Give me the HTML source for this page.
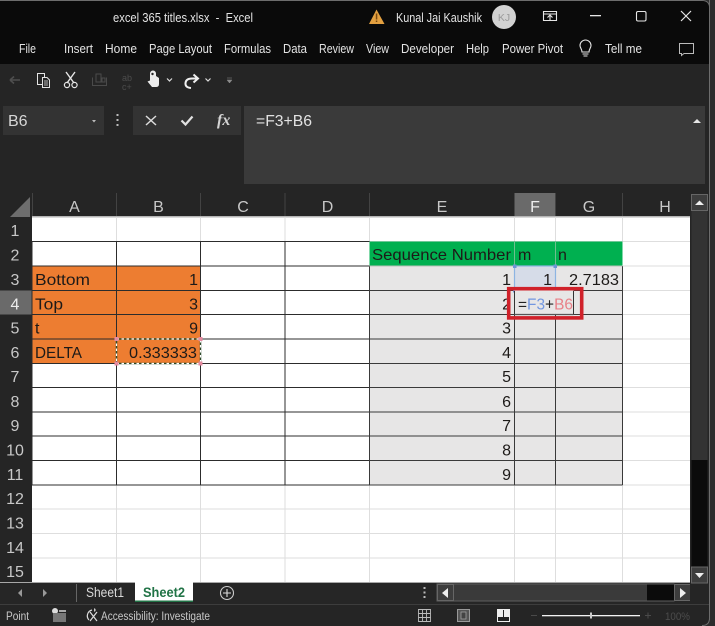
<!DOCTYPE html>
<html><head><meta charset="utf-8"><title>excel 365 titles.xlsx - Excel</title>
<style>
html,body{margin:0;padding:0;background:#2b2b2b;width:715px;height:626px;overflow:hidden}
svg{display:block;position:absolute;left:0;top:0}
text{font-family:"Liberation Sans",sans-serif}
.t{font-size:12.5px;fill:#e4e4e4}
.c{font-size:16px;fill:#1d1a18}
.e{font-size:16px;fill:#1d1a18;text-anchor:end}
.h{font-size:16px;fill:#c8c8c8;text-anchor:middle}
</style></head><body>
<svg width="715" height="626" viewBox="0 0 715 626" xmlns="http://www.w3.org/2000/svg">
<!-- window -->
<rect x="0" y="0" width="715" height="626" fill="#2d2d2d"/>
<path d="M0 0H702Q710 0 710 8V618Q710 626 702 626H0Z" fill="#252525"/>
<path d="M0 .5H702Q709.5 .5 709.5 8V618Q709.5 625.5 702 625.5" fill="none" stroke="#6d6d6d"/>
<path d="M0 1H702Q709 1 709 8V64H0Z" fill="#0a0a0a"/>
<!-- title bar -->
<text class="t" x="113" y="22" textLength="140" lengthAdjust="spacingAndGlyphs">excel 365 titles.xlsx&#160;&#160;-&#160;&#160;Excel</text>
<path d="M376.5 9.5L384.5 24H369Z" fill="#e3a040"/><rect x="375.8" y="13.5" width="1.5" height="6" fill="#7a4a10"/><rect x="375.8" y="20.5" width="1.5" height="1.5" fill="#7a4a10"/>
<text class="t" x="396" y="22" textLength="86" lengthAdjust="spacingAndGlyphs">Kunal Jai Kaushik</text>
<circle cx="504" cy="17" r="12" fill="#d2d2d2"/><text x="504" y="21" text-anchor="middle" font-size="10.5" fill="#9a9a9a">KJ</text>
<path d="M543.5 11.5H556.5V20.5H543.5ZM543.5 14H556.5M550 20V15.5M547.5 17.5L550 15L552.5 17.5" fill="none" stroke="#e6e6e6" stroke-width="1.1"/>
<rect x="590" y="15" width="11" height="1.3" fill="#e6e6e6"/>
<rect x="636.5" y="11.5" width="9.5" height="9.5" rx="1.5" fill="none" stroke="#e6e6e6" stroke-width="1.1"/>
<path d="M681 11L691 21M691 11L681 21" stroke="#e6e6e6" stroke-width="1.2" fill="none"/>
<!-- tabs -->
<text class="t" x="19" y="53" textLength="17" lengthAdjust="spacingAndGlyphs">File</text>
<text class="t" x="64" y="53" textLength="29" lengthAdjust="spacingAndGlyphs">Insert</text>
<text class="t" x="105" y="53" textLength="32" lengthAdjust="spacingAndGlyphs">Home</text>
<text class="t" x="149" y="53" textLength="63" lengthAdjust="spacingAndGlyphs">Page Layout</text>
<text class="t" x="224" y="53" textLength="47" lengthAdjust="spacingAndGlyphs">Formulas</text>
<text class="t" x="283" y="53" textLength="24" lengthAdjust="spacingAndGlyphs">Data</text>
<text class="t" x="319" y="53" textLength="35" lengthAdjust="spacingAndGlyphs">Review</text>
<text class="t" x="366" y="53" textLength="23" lengthAdjust="spacingAndGlyphs">View</text>
<text class="t" x="401" y="53" textLength="53" lengthAdjust="spacingAndGlyphs">Developer</text>
<text class="t" x="466" y="53" textLength="23" lengthAdjust="spacingAndGlyphs">Help</text>
<text class="t" x="502" y="53" textLength="61" lengthAdjust="spacingAndGlyphs">Power Pivot</text>
<path d="M582 52C582 49 580 48 580 45.5A5.5 5.5 0 0 1 591 45.5C591 48 589 49 589 52ZM582.5 54H588.5M583.5 56H587.5" fill="none" stroke="#e4e4e4" stroke-width="1.1"/>
<text class="t" x="605" y="53" textLength="37" lengthAdjust="spacingAndGlyphs">Tell me</text>
<path d="M679.5 43.5H693.500V53.5H684L681.5 55.5V53.5H679.5Z" fill="none" stroke="#bbb" stroke-width="1"/>
<!-- quick access -->
<path d="M10 80H20M10 80L14 76.5M10 80L14 83.5" stroke="#4e4e4e" stroke-width="1.6" fill="none"/>
<path d="M37.5 73.5H44.5V84.5H37.5Z" fill="#252525" stroke="#e4e4e4"/><path d="M42.5 77.5H47L49.5 80V87.5H42.5Z" fill="#252525" stroke="#e4e4e4"/><path d="M44 81H48M44 83H48M44 85H48" stroke="#e4e4e4" stroke-width=".8"/>
<path d="M66 72L74 83M75 72L67 83" stroke="#e6e6e6" stroke-width="1.4" fill="none"/><circle cx="67" cy="85" r="2.6" fill="none" stroke="#e6e6e6" stroke-width="1.2"/><circle cx="74.5" cy="85" r="2.6" fill="none" stroke="#e6e6e6" stroke-width="1.2"/>
<path d="M92.5 77.5V85.5H106.5V77.5M96 74H101V82H96ZM102 78H105V82H102Z" fill="none" stroke="#4a4a4a"/>
<text x="122" y="81" font-size="9" fill="#4c4c4c">ab</text><text x="122" y="90" font-size="9" fill="#4c4c4c">c+</text>
<path d="M150 73.5A3 3 0 0 1 156 73.5V76L159 78V84Q159 87 156 87H152L147.5 81.5L150 80.5Z" fill="#ececec"/><circle cx="152.5" cy="74" r="1.2" fill="#252525"/>
<path d="M167 78.5L169.5 81L172 78.5" stroke="#ddd" stroke-width="1.2" fill="none"/>
<path d="M191 88Q185 87.5 185.5 83Q186 78.5 192 78.5H197M193.5 74.5L198 78.5L193.5 82.5" stroke="#f0f0f0" stroke-width="2" fill="none"/>
<path d="M205.5 78.5L208 81L210.5 78.5" stroke="#ddd" stroke-width="1.2" fill="none"/>
<path d="M227 78H232M227 80H232L229.5 83Z" fill="#8a8a8a" stroke="#8a8a8a" stroke-width=".5"/>
<!-- formula bar -->
<rect x="3" y="106" width="101" height="29" fill="#333"/>
<text x="8" y="126" font-size="16" fill="#d6d6d6">B6</text>
<path d="M92 120H96L94 122.5Z" fill="#bbb"/>
<g fill="#bbb"><rect x="116.5" y="114" width="2" height="2"/><rect x="116.5" y="119" width="2" height="2"/><rect x="116.5" y="124" width="2" height="2"/></g>
<rect x="133" y="106" width="108" height="29" fill="#333"/>
<path d="M146 116L156 125M156 116L146 125" stroke="#dcdcdc" stroke-width="1.5" fill="none"/>
<path d="M181.5 120.5L185.5 124.5L192.5 116.5" stroke="#e2e2e2" stroke-width="2.2" fill="none"/>
<text x="217" y="125" font-size="16" font-style="italic" font-weight="bold" fill="#d4d4d4" style="font-family:'Liberation Serif',serif">fx</text>
<rect x="244" y="106" width="461" height="78" fill="#3a3a3a"/>
<text x="256" y="126" font-size="16" fill="#e2e2e2" textLength="56" lengthAdjust="spacingAndGlyphs">=F3+B6</text>
<path d="M693 123L697 119L701 123Z" fill="#e6e6e6"/>
<!-- column headers -->
<path d="M10 217H30V197Z" fill="#6e6e6e"/>
<rect x="514.5" y="193" width="41" height="24" fill="#6a6a6a"/>
<path d="M32.5 193V217M116.5 193V217M200.5 193V217M285 193V217M369.5 193V217M555.5 193V217M622.5 193V217" stroke="#434343"/>
<text class="h" x="74.5" y="212">A</text><text class="h" x="158.5" y="212">B</text><text class="h" x="243" y="212">C</text><text class="h" x="327.5" y="212">D</text><text class="h" x="442" y="212">E</text><text class="h" x="535" y="212" style="fill:#eee">F</text><text class="h" x="589" y="212">G</text><text class="h" x="665" y="212">H</text>
<!-- row headers -->
<rect x="0" y="290.5" width="32" height="24" fill="#6a6a6a"/>
<g>
<text class="h" x="15" y="236">1</text><text class="h" x="15" y="260.5">2</text><text class="h" x="15" y="285">3</text><text class="h" x="15" y="309.5" style="fill:#eee">4</text><text class="h" x="15" y="333.5">5</text><text class="h" x="15" y="358">6</text><text class="h" x="15" y="382">7</text><text class="h" x="15" y="407">8</text><text class="h" x="15" y="431">9</text><text class="h" x="15" y="455.5">10</text><text class="h" x="15" y="480">11</text><text class="h" x="15" y="504">12</text><text class="h" x="15" y="528.5">13</text><text class="h" x="15" y="553">14</text><text class="h" x="15" y="577">15</text>
</g>
<!-- sheet -->
<rect x="32" y="217" width="658" height="365" fill="#fff"/>
<rect x="32" y="216" width="658" height="1.5" fill="#b5b5b5"/>
<!-- light gridlines -->
<path d="M32 241.5H690M622 266H690M622 290.5H690M622 314.5H690M622 339H690M622 363.5H690M622 387.5H690M622 412H690M622 436H690M622 460.5H690M622 485H690M32 509H690M32 533.5H690M32 558H690" stroke="#dedede"/>
<path d="M116.5 217V241M200.5 217V241M285 217V241M369.5 217V241M514.5 217V241M555.5 217V241M622.5 217V241M116.5 485V582M200.5 485V582M285 485V582M369.5 485V582M514.5 485V582M555.5 485V582M622.5 485V582" stroke="#dedede"/>
<!-- fills -->
<rect x="32" y="266" width="168.5" height="97.5" fill="#ed7d31"/>
<rect x="369.5" y="241.5" width="253" height="24.5" fill="#00b050"/>
<rect x="369.5" y="266" width="253" height="219" fill="#e7e6e6"/>
<rect x="514.5" y="266" width="41" height="24.5" fill="#d6dce8"/>
<!-- dark borders -->
<path d="M32 241.5H369.5M32 266H200M200 266H369.5M32 290.5H369.5M32 314.5H369.5M32 339H369.5M32 363.5H369.5M32 387.5H369.5M32 412H369.5M32 436H369.5M32 460.5H369.5M32 485H369.5" stroke="#2c2c2c"/>
<path d="M32 241V485M116.5 241V485M200.5 241V485M285 241V485" stroke="#2c2c2c"/>
<path d="M369.5 266V485M622.5 266V485M369.5 290.5H622.5M369.5 314.5H622.5M369.5 339H622.5M369.5 363.5H622.5M369.5 387.5H622.5M369.5 412H622.5M369.5 436H622.5M369.5 460.5H622.5M369.5 485H622.5M514.5 314.5V485M555.5 314.5V485" stroke="#3a3a3a"/>
<path d="M369.5 266H622.5" stroke="#b8c0b8"/>
<path d="M514.5 241V266M555.5 241V266" stroke="#6fbf8f"/>
<!-- text -->
<text class="c" x="35" y="285" textLength="55" lengthAdjust="spacingAndGlyphs">Bottom</text>
<text class="c" x="35" y="309.5" textLength="28" lengthAdjust="spacingAndGlyphs">Top</text>
<text class="c" x="35" y="333.5">t</text>
<text class="c" x="35" y="358" textLength="47" lengthAdjust="spacingAndGlyphs">DELTA</text>
<text class="e" x="198" y="285">1</text><text class="e" x="198" y="309.5">3</text><text class="e" x="198" y="333.5">9</text>
<text class="c" x="129" y="358" textLength="68" lengthAdjust="spacingAndGlyphs">0.333333</text>
<text class="c" x="372" y="260" textLength="139" lengthAdjust="spacingAndGlyphs">Sequence Number</text>
<text class="c" x="518" y="260">m</text><text class="c" x="558" y="260">n</text>
<text class="e" x="511" y="285">1</text><text class="e" x="511" y="309.5">2</text><text class="e" x="511" y="333.5">3</text><text class="e" x="511" y="358">4</text><text class="e" x="511" y="382">5</text><text class="e" x="511" y="407">6</text><text class="e" x="511" y="431">7</text><text class="e" x="511" y="455.5">8</text><text class="e" x="511" y="480">9</text>
<text class="e" x="552" y="285">1</text>
<text class="c" x="569" y="285" textLength="50" lengthAdjust="spacingAndGlyphs">2.7183</text>
<!-- F3 ref highlight -->
<rect x="514.5" y="266" width="41" height="24.5" fill="none" stroke="#8db4e2" stroke-width="1.2"/>
<g fill="#6d94d6"><rect x="513" y="264.5" width="3.5" height="3.5"/><rect x="553.5" y="264.5" width="3.5" height="3.5"/><rect x="513" y="289" width="3.5" height="3.5"/><rect x="553.5" y="289" width="3.5" height="3.5"/></g>
<!-- B6 ref -->
<rect x="116.5" y="339" width="84" height="24.5" fill="none" stroke="#2f4a2a" stroke-width="1.5"/>
<rect x="116.5" y="339" width="84" height="24.5" fill="none" stroke="#fff" stroke-width="1.2" stroke-dasharray="2.5 2.5"/>
<g fill="#e58aa0"><rect x="114.5" y="337" width="4" height="4"/><rect x="198.5" y="337" width="4" height="4"/><rect x="114.5" y="361.5" width="4" height="4"/><rect x="198.5" y="361.5" width="4" height="4"/></g>
<!-- F4 editing -->
<rect x="514.5" y="290.5" width="59" height="24" fill="#e7e6e6"/>
<path d="M514.5 291V314.5M573.5 291V314.5" stroke="#333"/>
<path d="M514.5 314.5H573.5" stroke="#555" stroke-width="1.2"/>
<text x="518" y="309.5" font-size="16" fill="#222" textLength="55" lengthAdjust="spacingAndGlyphs">=<tspan fill="#7397e0">F3</tspan>+<tspan fill="#e88088">B6</tspan></text>
<!-- red box -->
<rect x="508.7" y="288.7" width="73" height="29.2" fill="none" stroke="#d0212a" stroke-width="3.6"/>
<!-- sheet tabs -->
<rect x="0" y="582" width="710" height="1.5" fill="#a8a8a8"/>
<rect x="0" y="583" width="710" height="21" fill="#262626"/>
<path d="M18 593L22 589V597ZM43 589L47 593L43 597Z" fill="#999"/>
<rect x="76" y="584" width="1" height="18" fill="#666"/>
<text x="86" y="597" font-size="13.5" fill="#d9d9d9" textLength="38" lengthAdjust="spacingAndGlyphs">Sheet1</text>
<rect x="135" y="582" width="58" height="20" fill="#fff"/><rect x="135" y="600.5" width="58" height="1.5" fill="#217346"/>
<text x="143" y="597" font-size="13.5" font-weight="bold" fill="#217346" textLength="42" lengthAdjust="spacingAndGlyphs">Sheet2</text>
<circle cx="227" cy="593" r="6.5" fill="none" stroke="#ccc" stroke-width="1.1"/><path d="M223 593H231M227 589V597" stroke="#ddd" stroke-width="1.1"/>
<g fill="#bbb"><rect x="423.5" y="587" width="2" height="2"/><rect x="423.5" y="591.5" width="2" height="2"/><rect x="423.5" y="596" width="2" height="2"/></g>
<!-- h scroll -->
<rect x="437" y="584" width="237" height="17" fill="#3a3a3a" stroke="#5e5e5e"/>
<rect x="647" y="584.5" width="27" height="16" fill="#0b0b0b"/>
<rect x="437.5" y="584.5" width="16" height="16" fill="#3d3d3d" stroke="#666"/><path d="M442 593L448 588V598Z" fill="#eee"/>
<rect x="674.5" y="584.5" width="16" height="16" fill="#3d3d3d" stroke="#666"/><path d="M686 593L680 588V598Z" fill="#eee"/>
<!-- v scroll -->
<rect x="690" y="193" width="20" height="411" fill="#252525"/>
<rect x="691.5" y="210" width="16" height="250" fill="#333"/>
<rect x="691.5" y="460" width="16" height="107" fill="#0b0b0b"/>
<rect x="691.5" y="194.5" width="16" height="16" fill="#3d3d3d" stroke="#666"/><path d="M695 205L699.5 200.5L704 205Z" fill="#eee"/>
<rect x="691.5" y="567" width="16" height="16" fill="#3d3d3d" stroke="#666"/><path d="M695 573L704 573L699.5 578Z" fill="#eee"/>
<rect x="709" y="0" width="1" height="620" fill="#6d6d6d"/>
<!-- status bar -->
<rect x="0" y="604" width="709" height="1" fill="#3d3d3d"/>
<text x="6" y="620" font-size="11.5" fill="#c8c8c8" textLength="23" lengthAdjust="spacingAndGlyphs">Point</text>
<circle cx="55" cy="611" r="3" fill="#ddd"/><rect x="53" y="613" width="13" height="9" fill="#777"/><rect x="59" y="610" width="7" height="2" fill="#aaa"/>
<path d="M92 610A6 6 0 0 0 89 620M90 612L97 621M97 612L90 621M94 609A1 1 0 0 1 94 611" fill="none" stroke="#ddd" stroke-width="1.2"/>
<text x="101" y="620" font-size="11.5" fill="#c8c8c8" textLength="109" lengthAdjust="spacingAndGlyphs">Accessibility: Investigate</text>
<path d="M418.5 609.5H430.5V621.5H418.5ZM422.5 609.5V621.5M426.5 609.5V621.5M418.5 613.5H430.5M418.5 617.5H430.5" fill="none" stroke="#bbb" stroke-width=".9"/>
<rect x="457.5" y="609.5" width="12" height="12" fill="#555" stroke="#999"/><rect x="461" y="612" width="5" height="7" fill="#444" stroke="#aaa" stroke-width=".7"/>
<rect x="497.5" y="609.5" width="12" height="12" fill="#222" stroke="#eee"/><rect x="498" y="610" width="5" height="7" fill="#eee"/><rect x="504" y="610" width="5" height="7" fill="#eee"/>
<rect x="531" y="615" width="6" height="1" fill="#4a4a4a"/>
<rect x="542" y="615" width="98" height="1.3" fill="#f2f2f2"/><rect x="590" y="612.5" width="2" height="6" fill="#ccc"/>
<path d="M645 615.5H651M648 612.5V618.5" stroke="#4a4a4a"/>
<text x="665" y="620" font-size="11" fill="#4c4c4c" textLength="25" lengthAdjust="spacingAndGlyphs">100%</text>
</svg>
</body></html>
